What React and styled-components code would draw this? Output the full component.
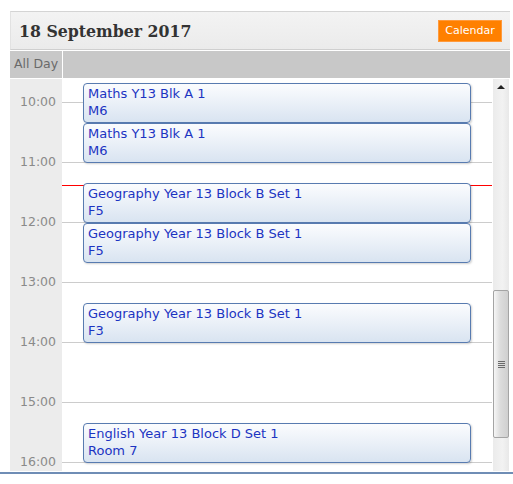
import React from 'react';
import styled, {createGlobalStyle} from "styled-components";

const GlobalStyle = createGlobalStyle`
  html, body {
    margin: 0;
    padding: 0;
    background: #ffffff;
  }
  body {
    font-family: "DejaVu Sans", Verdana, sans-serif;
  }
`

const Page = styled.div`
  padding-top: 11px;
  width: 513px;
`
const Panel = styled.div`
  margin: 0 3px 0 10px;
  width: 500px;
`
const Header = styled.div`
  display: flex;
  align-items: center;
  justify-content: space-between;
  height: 37px;
  padding: 0 8px 0 8px;
  border-top: 1px solid #d4d4d4;
  border-left: 1px solid #e2e2e2;
  border-bottom: 1px solid #cfcfcf;
  background: linear-gradient(#f3f3f3, #ebebeb);
`
const Title = styled.h1`
  margin: 0;
  font-family: "DejaVu Serif Condensed", "DejaVu Serif", serif;
  font-stretch: condensed;
  font-size: 17.5px;
  font-weight: 700;
  color: #333333;
`
const CalendarButton = styled.button`
  width: 64px;
  height: 22px;
  padding: 0;
  border: 1px solid #ff9a3c;
  background: #ff8000;
  color: #ffffff;
  font-family: "DejaVu Sans", Verdana, sans-serif;
  font-size: 11px;
  cursor: pointer;
`
const AllDayRow = styled.div`
  display: flex;
  height: 27px;
  margin-top: 1px;
  background: #c8c8c8;
`
const AllDayLabel = styled.div`
  width: 52px;
  border-right: 1px solid #ffffff;
  color: #6a6a6a;
  font-size: 12.5px;
  line-height: 25px;
  text-align: center;
`
const Body = styled.div`
  display: flex;
  height: 392px;
  margin-top: 1px;
`
const Viewport = styled.div`
  flex: 1;
  position: relative;
  overflow: hidden;
`
const Grid = styled.div`
  position: relative;
  margin-top: -37px;
`
const HourRow = styled.div`
  display: flex;
  height: 60px;
`
const HourLabel = styled.div`
  width: 52px;
  background: #ececec;
  text-align: right;
  box-sizing: border-box;
  padding-right: 6px;
  color: #8a8a8a;
  font-size: 12.5px;

  span {
    display: block;
    line-height: 16px;
    margin-top: -8px;
  }
`
const Slot = styled.div`
  flex: 1;
  border-top: 1px solid #cccccc;
`
const EventLayer = styled.div`
  position: absolute;
  top: 0;
  left: 52px;
  right: 0;
  bottom: 0;
`
const NowLine = styled.div`
  position: absolute;
  left: 0;
  right: 0;
  height: 1px;
  background: #ff0000;
`
const Event = styled.div`
  position: absolute;
  left: 21px;
  right: 21px;
  box-sizing: border-box;
  padding: 1px 4px 0;
  border: 1px solid #587bb0;
  border-radius: 4px;
  background: linear-gradient(#fbfcfe, #d9e4f1);
  box-shadow: 1px 1px 2px rgba(0, 0, 0, 0.18);
  overflow: hidden;
  color: #1c34c2;
  font-size: 13px;
  line-height: 17px;
`
const Scrollbar = styled.div`
  position: relative;
  width: 16px;
  margin: 0 1px;
  background: linear-gradient(90deg, #ebebeb, #f2f2f2 60%, #e8e8e8);
`
const UpArrow = styled.div`
  width: 0;
  height: 0;
  margin: 6px auto 0;
  border-left: 4px solid transparent;
  border-right: 4px solid transparent;
  border-bottom: 4px solid #222222;
`
const Thumb = styled.div`
  position: absolute;
  top: 211px;
  left: 0;
  width: 16px;
  height: 148px;
  box-sizing: border-box;
  border: 1px solid #a4a4a4;
  border-radius: 2px;
  background: linear-gradient(90deg, #f6f6f6, #dcdcdc 45%, #cfcfcf);
  display: flex;
  align-items: center;
  justify-content: center;
`
const Grip = styled.div`
  width: 7px;
  height: 7px;
  background: repeating-linear-gradient(#6a6a6a 0 1px, transparent 1px 2px);
`
const BottomRule = styled.div`
  height: 2px;
  margin-top: 1px;
  background: #6f8db5;
`

// first row (9:00) sits above the scrolled viewport, so its label is left empty
const hours = [9, 10, 11, 12, 13, 14, 15, 16];

const events = [
    {top: 41, title: "Maths Y13 Blk A 1", room: "M6"},
    {top: 81, title: "Maths Y13 Blk A 1", room: "M6"},
    {top: 141, title: "Geography Year 13 Block B Set 1", room: "F5"},
    {top: 181, title: "Geography Year 13 Block B Set 1", room: "F5"},
    {top: 261, title: "Geography Year 13 Block B Set 1", room: "F3"},
    {top: 381, title: "English Year 13 Block D Set 1", room: "Room 7"},
];

const App = () => {
    return (
        <Page>
            <GlobalStyle/>
            <Panel>
                <Header>
                    <Title>18 September 2017</Title>
                    <CalendarButton>Calendar</CalendarButton>
                </Header>
                <AllDayRow>
                    <AllDayLabel>All Day</AllDayLabel>
                </AllDayRow>
                <Body>
                    <Viewport>
                        <Grid>
                            {hours.map(h => (
                                <HourRow key={h}>
                                    <HourLabel>{h > 9 && <span>{h}:00</span>}</HourLabel>
                                    <Slot/>
                                </HourRow>
                            ))}
                            <EventLayer>
                                <NowLine style={{top: 143}}/>
                                {events.map((e, i) => (
                                    <Event key={i} style={{top: e.top, height: 40}}>
                                        <div>{e.title}</div>
                                        <div>{e.room}</div>
                                    </Event>
                                ))}
                            </EventLayer>
                        </Grid>
                    </Viewport>
                    <Scrollbar>
                        <UpArrow/>
                        <Thumb><Grip/></Thumb>
                    </Scrollbar>
                </Body>
            </Panel>
            <BottomRule/>
        </Page>
    )
};

export default App;
